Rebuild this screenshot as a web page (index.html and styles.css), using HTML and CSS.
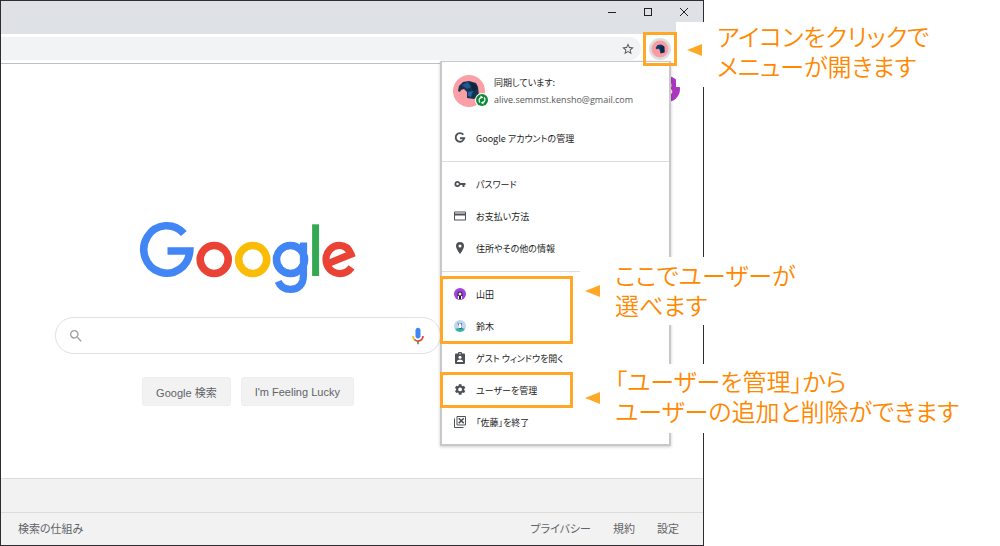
FILE: index.html
```html
<!DOCTYPE html>
<html lang="ja">
<head>
<meta charset="utf-8">
<title>Chrome ユーザーの切り替え</title>
<link rel="stylesheet" href="styles.css">
</head>
<body>
<div class="stage">
  <div class="browser">
    <header class="titlebar">
      <button class="win-btn" aria-label="最小化"><svg width="10" height="10" viewBox="0 0 10 10"><path d="M1 5.5h8" /></svg></button>
      <button class="win-btn" aria-label="最大化"><svg width="10" height="10" viewBox="0 0 10 10"><rect x="1.5" y="1.5" width="7" height="7" /></svg></button>
      <button class="win-btn" aria-label="閉じる"><svg width="10" height="10" viewBox="0 0 10 10"><path d="M1 1l8 8M9 1l-8 8" /></svg></button>
    </header>
    <div class="toolbar">
      <div class="omnibox">
        <input class="address" type="text" aria-label="アドレス">
        <button class="star" aria-label="ブックマーク"><svg width="14" height="14" viewBox="0 0 24 24"><path fill="#555" d="M22 9.24l-7.19-.62L12 2 9.19 8.63 2 9.24l5.46 4.73L5.82 21 12 17.27 18.18 21l-1.63-7.03L22 9.24zM12 15.4l-3.76 2.27 1-4.28-3.32-2.88 4.38-.38L12 6.1l1.71 4.04 4.38.38-3.32 2.88 1 4.28L12 15.4z"/></svg></button>
      </div>
      <button class="profile" aria-label="プロフィール"><svg width="24" height="24" viewBox="0 0 24 24"><circle cx="12" cy="12" r="11" fill="#dcdfe0"/><circle cx="12" cy="12" r="8.500" fill="#fb9ca3"/><path fill="#123b68" d="M7.500 11l2-3 4-.5 3 2v6l-4 1-1-4-1.500-1-1 1z"/><path fill="#0a2850" d="M12 10l4-1 .5 6-3 1z"/></svg></button>
    </div>

    <main class="page">
      <div class="account-row"><span class="account">B</span></div>
      <svg class="logo" role="img" aria-label="Google" width="216" height="72" viewBox="140 222 216 72" fill="none" stroke-width="7.600">
        <path stroke="#4285f4" d="M183.900 233.600A23 23.700 0 1 0 189.750 251H167.500"/>
        <circle stroke="#ea4335" cx="214.200" cy="259.500" r="14"/>
        <circle stroke="#fbbc05" cx="252.700" cy="259.500" r="14"/>
        <circle stroke="#4285f4" cx="290.500" cy="259.500" r="14"/>
        <path stroke="#4285f4" stroke-width="7.200" d="M303.500 242.500V275C303.500 285 298 289.400 290.500 289.400C284 289.400 280 286 278.200 281.400"/>
        <path stroke="#34a853" stroke-width="7" d="M315.600 224.300V276"/>
        <path stroke="#ea4335" stroke-width="7.200" d="M327 264L351 254.200C348.500 248 344.500 245.400 339.500 245.400C332 245.400 326 251.500 326 259.500C326 267.500 332 273.600 340 273.600C345.500 273.600 349 271 351.500 267.400"/>
      </svg>
      <form class="search-form">
        <div class="searchbox">
          <svg width="16" height="16" viewBox="0 0 24 24"><path fill="#9aa0a6" d="M15.500 14h-.79l-.28-.27A6.471 6.471 0 0 0 16 9.500 6.500 6.500 0 1 0 9.500 16c1.610 0 3.090-.59 4.230-1.570l.27.28v.79l5 4.990L20.490 19l-4.990-5zm-6 0C7.010 14 5 11.990 5 9.500S7.010 5 9.500 5 14 7.010 14 9.500 11.990 14 9.500 14z"/></svg>
          <input class="query" type="text" aria-label="検索">
          <button type="button" class="mic" aria-label="音声検索"><svg width="20" height="20" viewBox="0 0 24 24"><path fill="#4285f4" d="M12 15c1.700 0 3-1.300 3-3V5c0-1.700-1.300-3-3-3S9 3.300 9 5v7c0 1.700 1.300 3 3 3z"/><path fill="#34a853" d="M11 18.100h2V22h-2z"/><path fill="#fbbc05" d="M7 16.900c-1.300-1.300-2-3-2-4.900h2c0 1.400.6 2.700 1.500 3.500z"/><path fill="#ea4335" d="M12 19c-1.900 0-3.700-.8-5-2.100l1.500-1.400c.9.900 2.100 1.500 3.500 1.500 2.800 0 5-2.200 5-5h2c0 3.900-3.100 7-7 7z"/></svg></button>
        </div>
        <div class="search-actions">
          <button type="button" class="search-btn">Google 検索</button>
          <button type="button" class="search-btn">I'm Feeling Lucky</button>
        </div>
      </form>
    </main>

    <footer class="footer">
      <div class="footer-top"></div>
      <nav class="footer-links">
        <a href="#">検索の仕組み</a>
        <span class="footer-right"><a href="#">プライバシー</a><a href="#">規約</a><a href="#">設定</a></span>
      </nav>
    </footer>

    <aside class="menu" aria-label="プロフィールメニュー">
      <div class="menu-head">
        <svg width="36" height="34" viewBox="0 0 36 34"><circle cx="16" cy="17" r="16" fill="#fb9fa6"/><path fill="#16324f" d="M6 12l4-4 6-1 7 2 2 4 1 9-5 3-7-1v-6l-3-3-3 1-1 2-2-1z"/><path fill="#1d5a94" d="M9 11l6-3 3 5-4 2z"/><path fill="#0d2340" d="M17 8l6 3 1 4-4 2z"/><path fill="#2565a3" d="M15 18l5-1-2 6-3-1z"/><circle cx="29" cy="26" r="7" fill="#fff"/><circle cx="29" cy="26" r="6" fill="#0c8a38"/><path fill="none" stroke="#fff" stroke-width="1.200" d="M27 28.500a3 3 0 0 1 1-5M31 23.500a3 3 0 0 1-1 5"/><path fill="#fff" d="M27.500 21.500l2.800 1.800-2.800 1.800zM30.500 26.900v3.600l-2.800-1.800z"/></svg>
        <div class="who"><div class="sync">同期しています:</div><div class="mail">alive.semmst.kensho@gmail.com</div></div>
      </div>
      <button class="item"><svg width="12" height="12" viewBox="0 0 12 12"><path fill="none" stroke="#4d5156" stroke-width="1.900" d="M9.300 2.700A4.300 4.300 0 1 0 10.200 6.200H6"/></svg>Google アカウントの管理</button>
      <div class="group">
        <button class="item"><svg width="12" height="12" viewBox="0 0 24 24"><path fill="#4d5156" d="M12.650 10A6 6 0 0 0 7 6a6 6 0 1 0 5.650 8H17v4h4v-4h2v-4H12.650zM7 14.500a2.500 2.500 0 1 1 0-5 2.500 2.500 0 0 1 0 5z"/></svg>パスワード</button>
        <button class="item"><svg width="12" height="12" viewBox="0 0 24 24"><path fill="#4d5156" d="M22 3H2C.9 3 0 3.900 0 5v14c0 1.100.9 2 2 2h20c1.100 0 2-.9 2-2V5c0-1.100-.9-2-2-2zm0 16H2v-8h20v8zm0-12H2V5h20v2z"/></svg>お支払い方法</button>
        <button class="item"><svg width="12" height="12" viewBox="0 0 24 24"><path fill="#4d5156" d="M12 0a8 8 0 0 0-8 8c0 6 8 16 8 16s8-10 8-16a8 8 0 0 0-8-8zm0 11a3 3 0 1 1 0-6 3 3 0 0 1 0 6z"/></svg>住所やその他の情報</button>
      </div>
      <div class="group">
        <div class="marked">
          <button class="item"><svg width="12" height="12" viewBox="0 0 12 12"><circle cx="6" cy="6" r="6" fill="#a142d8"/><path fill="#332542" d="M3.500 6a2.500 2.500 0 0 1 5 0v2h-5z"/><circle cx="6" cy="6" r="1.500" fill="#efe5ee"/><path fill="#fff" d="M4 8h4v3H4z"/><path fill="#222" d="M5 8h2v3H5z"/></svg>山田</button>
          <button class="item"><svg width="12" height="12" viewBox="0 0 12 12"><circle cx="6" cy="6" r="6" fill="#bfd7f2"/><path fill="#25b7a4" d="M1 9q5-2 10 0-2 3-5 3T1 9z"/><path fill="#566270" d="M3 2l2 2 3-1-1 4 2 2H5V6z"/><path fill="#fff" d="M5 4h2v4H5z"/></svg>鈴木</button>
        </div>
        <button class="item"><svg width="12" height="12" viewBox="0 0 24 24"><path fill="#4d5156" d="M20 3h-4a4 4 0 0 0-8 0H4a2 2 0 0 0-2 2v17a2 2 0 0 0 2 2h16a2 2 0 0 0 2-2V5a2 2 0 0 0-2-2z"/><circle cx="12" cy="3.500" r="1.300" fill="#fff"/><circle cx="12" cy="10.500" r="3" fill="#fff"/><path fill="#fff" d="M6 20v-1c0-2.500 4-4 6-4s6 1.500 6 4v1z"/></svg>ゲスト ウィンドウを開く</button>
        <div class="marked">
          <button class="item"><svg width="12" height="12" viewBox="2 2 22 22"><path fill="#4d5156" d="M20.500 13a8 8 0 0 0 0-2l2.200-1.700-2.300-4-2.600 1a8 8 0 0 0-1.700-1L15.700 2.500h-4.900L10.400 5.300a8 8 0 0 0-1.700 1l-2.600-1-2.300 4L6 11a8 8 0 0 0 0 2l-2.200 1.700 2.300 4 2.600-1a8 8 0 0 0 1.700 1l.4 2.800h4.900l.4-2.800a8 8 0 0 0 1.700-1l2.600 1 2.300-4zM13.200 15.500a3.500 3.500 0 1 1 0-7 3.500 3.500 0 0 1 0 7z"/></svg>ユーザーを管理</button>
        </div>
        <button class="item"><svg width="12" height="12" viewBox="0 0 24 24"><path fill="#4d5156" d="M2 5H0v17a2 2 0 0 0 2 2h17v-2H2z"/><path fill="#4d5156" fill-rule="evenodd" d="M7 0h15a2 2 0 0 1 2 2v15a2 2 0 0 1-2 2H7a2 2 0 0 1-2-2V2a2 2 0 0 1 2-2zm0 2v15h15V2z"/><path stroke="#4d5156" stroke-width="3.500" d="M9.500 4.500l10 10M19.500 4.500l-10 10"/></svg>「佐藤」を終了</button>
      </div>
    </aside>
  </div>

  <p class="callout callout-icon">アイコンをクリックで<br>メニューが開きます</p>
  <p class="callout callout-users">ここでユーザーが<br>選べます</p>
  <p class="callout callout-manage">「ユーザーを管理」から<br>ユーザーの追加と削除ができます</p>
</div>
</body>
</html>
```
FILE: styles.css
```css
* { box-sizing: border-box; }

body {
  margin: 0;
  background: #fff;
  color: #333;
  font-family: "Liberation Sans", "Noto Sans CJK JP", sans-serif;
}

button,
input {
  margin: 0;
  padding: 0;
  border: 0;
  background: none;
  color: inherit;
  font: inherit;
}

svg { display: block; flex: none; }

.stage {
  position: relative;
  display: flex;
  padding-right: 296px;
}

.browser {
  position: relative;
  display: flex;
  flex: 1;
  flex-direction: column;
  min-height: 100vh;
  border: 1px solid #302b30;
}

.titlebar {
  display: flex;
  justify-content: flex-end;
  height: 33px;
  padding: 0 1px;
  background: #dee1e6;
}

.win-btn {
  display: flex;
  justify-content: center;
  width: 36px;
  padding-top: 6px;
}

.win-btn svg { fill: none; stroke: #222; }

.toolbar {
  display: flex;
  align-items: center;
  height: 30px;
  padding-right: 29px;
  border-bottom: 1px solid #c0c0c0;
}

.omnibox {
  display: flex;
  flex: 1;
  align-items: center;
  height: 23px;
  margin-right: 5px;
  padding-right: 6px;
  border-radius: 0 12px 12px 0;
  background: #f1f3f4;
}

.address { flex: 1; min-width: 0; }

.profile {
  position: relative;
  z-index: 3;
  padding: 2px;
  outline: 3px solid #ffa827;
}

.page {
  display: flex;
  flex: 1;
  flex-direction: column;
  align-items: center;
  padding: 12px 208px 24px 0;
}

.account-row {
  align-self: stretch;
  display: flex;
  justify-content: flex-end;
  margin-right: -185px;
}

.account {
  width: 26px;
  border-radius: 50%;
  background: #ab37c0;
  color: #fff;
  font-size: 18px;
  line-height: 26px;
  text-align: center;
}

.logo { margin-top: 120px; overflow: visible; }

.search-form {
  display: flex;
  flex-direction: column;
  align-items: center;
  margin-top: 23px;
}

.searchbox {
  display: flex;
  align-items: center;
  width: 386px;
  height: 37px;
  padding: 0 12px;
  border: 1px solid #dfe1e5;
  border-radius: 19px;
}

.query { flex: 1; min-width: 0; }

.search-actions {
  display: flex;
  gap: 10px;
  margin-top: 23px;
}

.search-btn {
  height: 29px;
  padding: 0 13px;
  border: 1px solid #eee;
  border-radius: 3px;
  background: #f2f2f2;
  color: #5f6368;
  font-size: 11px;
}

.footer {
  border-top: 1px solid #dcdcdc;
  background: #f2f2f2;
  color: #5f6368;
  font-size: 11px;
}

.footer-top { height: 33px; }

.footer-links {
  display: flex;
  justify-content: space-between;
  padding: 0 24px 0 17px;
  border-top: 1px solid #dcdcdc;
  line-height: 32px;
  font-feature-settings: "palt";
}

.footer-links a { color: inherit; text-decoration: none; }

.footer-right { display: flex; gap: 22px; }

.menu {
  position: absolute;
  z-index: 1;
  top: 60px;
  right: 32px;
  width: 231px;
  padding-bottom: 6px;
  border: 2px solid #c8c8c8;
  border-top-width: 1px;
  background: #fff;
  box-shadow: 0 1px 3px #0003;
  color: #222;
  font-family: "Noto Sans CJK JP", sans-serif;
  font-size: 9px;
  font-feature-settings: "palt";
}

.menu-head {
  display: flex;
  gap: 5px;
  padding: 12px 11px 14px;
}

.who { line-height: 17px; }

.mail {
  color: #555;
  font-family: "Open Sans", sans-serif;
}

.item {
  display: flex;
  gap: 10px;
  align-items: center;
  width: 100%;
  height: 32px;
  padding-left: 12px;
  text-align: left;
  white-space: nowrap;
}

.group {
  margin-top: 7px;
  padding-top: 6px;
  border-top: 1px solid #ddd;
}

.marked {
  width: 129px;
  outline: 3px solid #ffa827;
  outline-offset: -1px;
}

.callout {
  position: absolute;
  z-index: 2;
  right: 0;
  margin: 0;
  background: #fff;
  color: #ff8800;
  font-family: "Liberation Sans", "Noto Sans CJK JP", sans-serif;
  font-size: 24px;
  font-weight: 350;
  line-height: 30px;
  font-feature-settings: "palt";
  white-space: nowrap;
}

.callout::before {
  content: "";
  position: absolute;
  border: solid transparent;
  border-width: 6px 15px 6px 0;
  border-right-color: #ffa827;
}

.callout-icon {
  top: 22px;
  width: 324px;
  padding: 1px 0 4px 41px;
}

.callout-icon::before { top: 22px; left: 11px; }

.callout-users {
  top: 257px;
  width: 420px;
  padding: 5px 0 3px 35px;
}

.callout-manage {
  top: 364px;
  width: 420px;
  padding: 4px 0 5px 35px;
}

.callout-users::before,
.callout-manage::before { top: 28px; left: 5px; }
```
